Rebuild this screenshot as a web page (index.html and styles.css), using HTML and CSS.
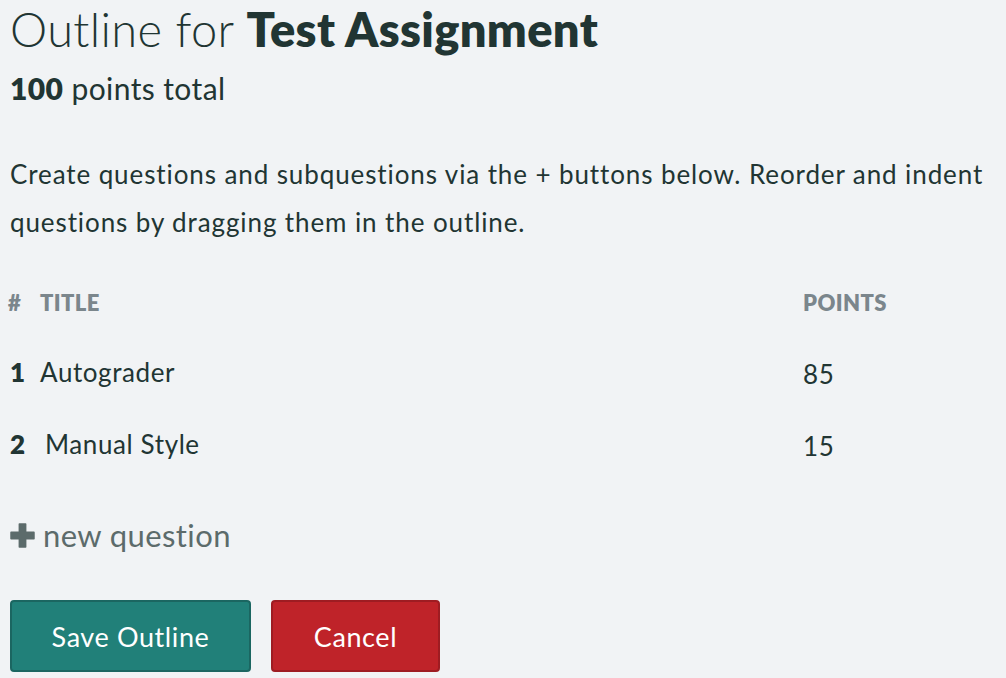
FILE: index.html
```html
<!DOCTYPE html>
<html>
<head>
<meta charset="utf-8">
<link rel="stylesheet" href="styles.css">
</head>
<body>
<main class="page">
  <h1 class="title">Outline for <strong>Test Assignment</strong></h1>
  <p class="total"><strong>100</strong> points total</p>
  <p class="help">Create questions and subquestions via the + buttons below. Reorder and indent questions by dragging them in the outline.</p>
  <div class="table">
    <div class="row head">
      <span class="num">#</span>
      <span class="name">TITLE</span>
      <span class="pts">POINTS</span>
    </div>
    <div class="row item">
      <span class="num">1</span>
      <span class="name">Autograder</span>
      <span class="pts">85</span>
    </div>
    <div class="row item">
      <span class="num">2</span>
      <span class="name name-2">Manual Style</span>
      <span class="pts">15</span>
    </div>
  </div>
  <div class="add"><svg class="plus" width="25" height="25" viewBox="0 0 24 24"><path d="M9 1h6v8h8v6h-8v8H9v-8H1V9h8z" fill="currentColor" stroke="currentColor" stroke-width="1.5" stroke-linejoin="round"/></svg><span>new question</span></div>
  <div class="actions">
    <button class="btn save">Save Outline</button>
    <button class="btn cancel">Cancel</button>
  </div>
</main>
</body>
</html>
```
FILE: styles.css
```css
html, body {
  margin: 0;
  padding: 0;
  background: #f1f3f5;
}
body {
  font-family: "Lato", "Noto Sans", sans-serif;
  color: #213533;
}
.page {
  padding: 0 10px;
}
.title {
  margin: 0;
  padding-top: 1px;
  font-size: 47px;
  line-height: 56px;
  font-weight: 300;
  letter-spacing: 0.35px;
}
.title strong {
  font-weight: 800;
}
.total {
  margin: 11px 0 0;
  font-size: 30px;
  line-height: 40px;
  letter-spacing: 0.4px;
}
.total strong {
  font-weight: 800;
}
.help {
  margin: 42px 0 0;
  font-size: 26px;
  line-height: 48px;
  letter-spacing: 0.9px;
}
.table {
  margin-top: 36px;
}
.row {
  display: flex;
  align-items: center;
}
.head {
  height: 40px;
  margin-bottom: 14px;
  font-size: 22px;
  font-weight: 800;
  color: #7b868c;
  letter-spacing: 0.4px;
}
.item {
  height: 72px;
  font-size: 26px;
  letter-spacing: 0.6px;
}
.num {
  width: 30px;
  font-weight: 800;
}
.head .num {
  margin-left: -2px;
  width: 32px;
}
.name {
  flex: 1;
}
.name-2 {
  padding-left: 5px;
}
.pts {
  width: 193px;
}
.item .pts {
  padding-top: 4px;
}
.add {
  margin-top: 36px;
  display: flex;
  align-items: center;
  gap: 8px;
  font-size: 31px;
  letter-spacing: 0.4px;
  color: #5c6b6b;
}
.plus {
  color: #5c6b6b;
}
.actions {
  margin-top: 46px;
  display: flex;
  gap: 20px;
}
.btn {
  font-family: inherit;
  height: 72px;
  font-size: 27px;
  letter-spacing: 0.6px;
  color: #ffffff;
  border-radius: 4px;
  cursor: pointer;
}
.save {
  width: 241px;
  background: #218079;
  border: 2px solid #1b6661;
}
.cancel {
  width: 169px;
  background: #bf2329;
  border: 2px solid #9e1c22;
}
```
